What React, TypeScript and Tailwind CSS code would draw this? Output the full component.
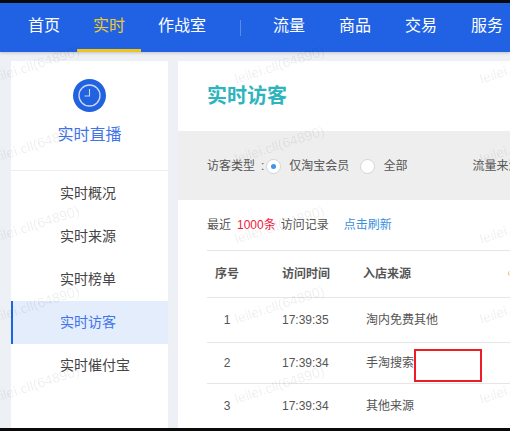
const NAV_LEFT = ["首页", "实时", "作战室"];
const NAV_RIGHT = ["流量", "商品", "交易", "服务"];
const SIDE_ITEMS = ["实时概况", "实时来源", "实时榜单", "实时访客", "实时催付宝"];
const ROWS = [
  { no: 1, time: "17:39:35", source: "淘内免费其他", cls: "h-[45px]" },
  { no: 2, time: "17:39:34", source: "手淘搜索", cls: "h-[41px]" },
  { no: 3, time: "17:39:34", source: "其他来源", cls: "h-[44px]" },
];

// watermark layer, one text per grid cell
const MARKS = [-10, 235, 480].flatMap((x) =>
  [72, 152, 232, 312, 392].map((y) => ({ x, y })),
);

const ClockBadge = () => (
  <svg width="33" height="33" viewBox="0 0 33 33">
    <circle cx="16.5" cy="16.5" r="16.5" fill="#2162e0" />
    <circle cx="16.5" cy="16.5" r="10.5" fill="none" stroke="#c9d8f7" strokeWidth="1.3" />
    <path d="M16.5 10v7h-5" fill="none" stroke="#c9d8f7" strokeWidth="1.1" />
  </svg>
);

const Radio = ({ checked }: { checked?: boolean }) => (
  <span className="flex h-[15px] w-[15px] shrink-0 items-center justify-center rounded-full border border-[#d4d4d4] bg-white">
    {checked && <span className="h-[5px] w-[5px] rounded-full bg-[#3b95e8]" />}
  </span>
);

export default function App() {
  return (
    <div className="relative flex h-[431px] w-[510px] flex-col overflow-hidden bg-[#edf0f5] font-['Liberation_Sans','Noto_Sans_CJK_SC',sans-serif] text-[#555]">
      <div className="h-[3px] shrink-0 bg-[#0a0a0a]" />

      {/* Top nav */}
      <nav className="flex h-[49px] shrink-0 items-stretch whitespace-nowrap bg-[#2062e3] pl-3 text-[16px] text-white shadow-[0_1px_3px_rgba(0,0,0,0.2)]">
        <div className="flex shrink-0 gap-px">
          {NAV_LEFT.map((n) => (
            <a
              key={n}
              className={`flex items-center border-b-[3px] px-4 ${
                n === "实时" ? "border-[#f0c419] text-[#f0c92c]" : "border-transparent"
              }`}
            >
              {n}
            </a>
          ))}
        </div>
        <span className="ml-[18px] mr-4 mt-[17px] h-[16px] w-px shrink-0 bg-[#5a8cec]" />
        <div className="flex shrink-0 gap-[2px]">
          {NAV_RIGHT.map((n) => (
            <a key={n} className="flex items-center border-b-[3px] border-transparent px-4">
              {n}
            </a>
          ))}
        </div>
      </nav>

      {/* Body */}
      <div className="flex min-h-0 flex-1 gap-[10px] pl-[11px] pt-[9px]">
        <aside className="w-[157px] shrink-0 bg-white">
          <div className="flex h-[110px] flex-col items-center border-b border-[#ebedf0] pt-[18px]">
            <ClockBadge />
            <span className="mt-[11px] text-[16px] leading-6 text-[#3f74ea]">实时直播</span>
          </div>
          <div className="pt-px">
            {SIDE_ITEMS.map((s) => (
              <div
                key={s}
                className={`flex h-[43px] items-center text-[14px] ${
                  s === "实时访客"
                    ? "border-l-2 border-[#1a66e0] bg-[#e3edfb] pl-[47px] text-[#3f74ea]"
                    : "pl-[49px] text-[#444]"
                }`}
              >
                {s}
              </div>
            ))}
          </div>
        </aside>

        <main className="min-w-0 flex-1 overflow-hidden bg-white">
          <h1 className="flex h-[70px] items-center pl-[29px] text-[20px] font-bold text-[#2db4bd]">实时访客</h1>

          <div className="flex h-[69px] items-center whitespace-nowrap bg-[#eeeeee] pl-[29px] pt-[1px] text-[12px]">
            <span>访客类型</span>
            <span className="ml-[6px]">:</span>
            <span className="ml-[2px]"><Radio checked /></span>
            <span className="ml-[8px]">仅淘宝会员</span>
            <span className="ml-[11px]"><Radio /></span>
            <span className="ml-[8px]">全部</span>
            <span className="ml-[65px]">流量来源</span>
          </div>

          <div className="pl-[29px]">
            <div className="flex h-[51px] items-center whitespace-nowrap border-b border-[#e6e6e6] text-[12px]">
              <span>最近</span>
              <span className="ml-[6px] text-[#f0203c]">1000条</span>
              <span className="ml-[5px]">访问记录</span>
              <span className="ml-[15px] text-[#3a8fdc]">点击刷新</span>
            </div>

            <div className="relative flex h-[47px] items-center border-b border-[#e6e6e6] text-[12px] font-bold">
              <span className="w-[75px] pl-2">序号</span>
              <span className="w-[81px]">访问时间</span>
              <span>入店来源</span>
              <span className="absolute right-[-1px] top-[20px] h-[5px] w-[3px] rounded-l-full border-l border-[#f0b070]" />
            </div>

            {ROWS.map((r) => (
              <div key={r.no} className={`flex items-center border-b border-[#e6e6e6] text-[12px] last:border-b-0 ${r.cls}`}>
                <span className="w-[75px]"><span className="block w-[40px] text-center">{r.no}</span></span>
                <span className="w-[84px]">{r.time}</span>
                <span>{r.source}</span>
              </div>
            ))}
          </div>
        </main>
      </div>

      <div className="h-[3px] shrink-0 bg-[#0a0a0a]" />

      {/* Annotation drawn over the shot */}
      <div className="absolute left-[414px] top-[349px] h-[33px] w-[68px] border-2 border-[#ee1c25] bg-white" />

      {/* Watermark */}
      {MARKS.map((m) => (
        <span
          key={`${m.x}-${m.y}`}
          className="pointer-events-none absolute origin-left -rotate-[18deg] whitespace-nowrap text-[14px] leading-none text-black/[0.08]"
          style={{ left: m.x, top: m.y }}
        >
          leilei.cll(64890)
        </span>
      ))}
    </div>
  );
}
